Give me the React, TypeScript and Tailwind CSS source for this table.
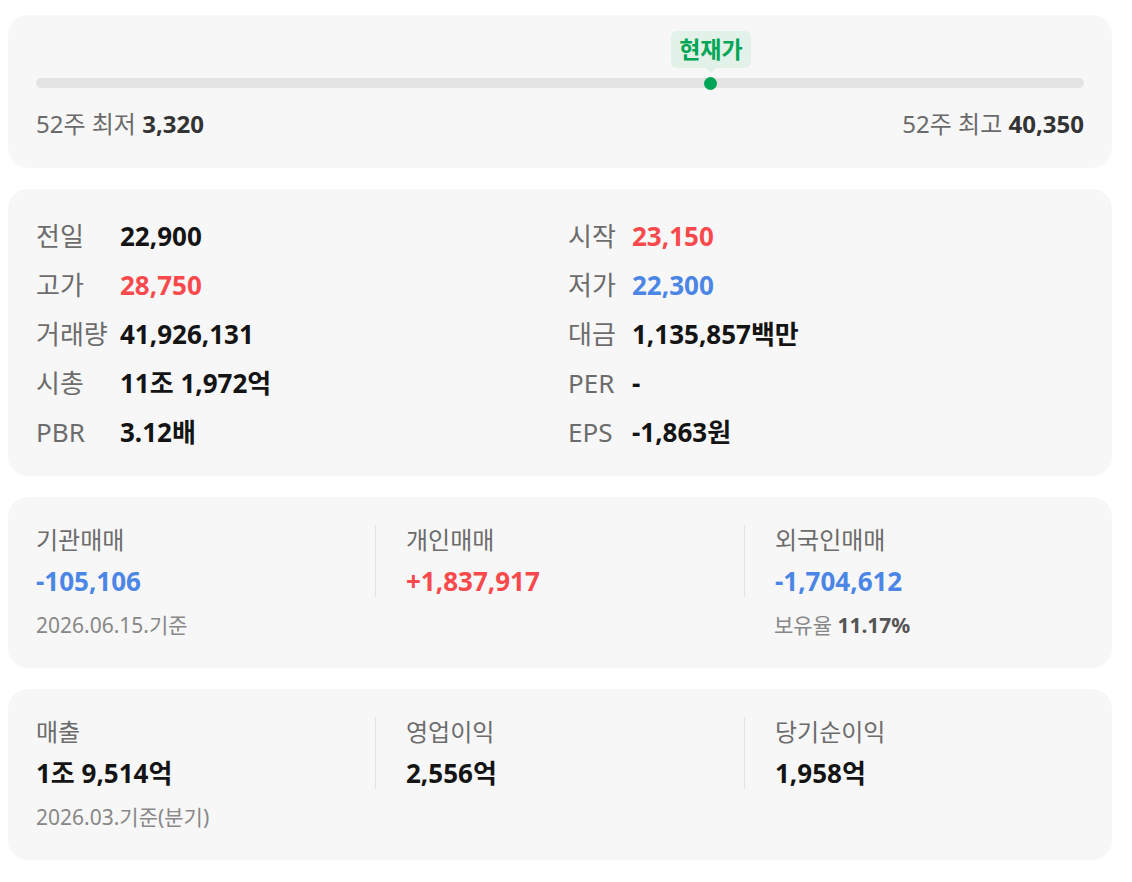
import React from "react"

const font = { fontFamily: '"Noto Sans", "Noto Sans CJK KR", sans-serif' }

type Cell = { label: string; value: string; tone?: "up" | "down" }

const toneClass = (tone?: "up" | "down") =>
  tone === "up" ? "text-[#f84a4d]" : tone === "down" ? "text-[#4b86e6]" : "text-[#141414]"

function PriceRange() {
  const pos = 64.4
  return (
    <div className="rounded-[20px] bg-[#f7f7f7] px-7 pt-4 pb-[28px]">
      <div className="relative h-[62px]">
        <div className="absolute top-[47px] left-0 right-0 h-[10px] rounded-full bg-[#e4e4e4]" />
        <div
          className="absolute top-0 flex -translate-x-1/2 flex-col items-center"
          style={{ left: `${pos}%` }}
        >
          <div className="flex h-[37px] w-[80px] items-center justify-center rounded-[6px] bg-[#e2f2e8] text-[23px] font-bold text-[#00a556]">
            현재가
          </div>
          <div className="h-0 w-0 border-x-[5px] border-t-[5px] border-x-transparent border-t-[#e2f2e8]" />
          <div className="mt-[4px] h-[13px] w-[13px] rounded-full bg-[#00a556]" />
        </div>
      </div>
      <div className="mt-[15px] flex justify-between text-[24px] leading-[32px] text-[#6a6a6a]">
        <span>
          52주 최저 <b className="font-bold text-[#333]">3,320</b>
        </span>
        <span>
          52주 최고 <b className="font-bold text-[#333]">40,350</b>
        </span>
      </div>
    </div>
  )
}

function Row({ label, value, tone, labelW }: Cell & { labelW: string }) {
  return (
    <div className="flex h-[49px] items-center text-[26px]">
      <span className={`${labelW} shrink-0 text-[#6c6c6c]`}>{label}</span>
      <span className={`font-bold ${toneClass(tone)}`}>{value}</span>
    </div>
  )
}

function Quote() {
  const left: Cell[] = [
    { label: "전일", value: "22,900" },
    { label: "고가", value: "28,750", tone: "up" },
    { label: "거래량", value: "41,926,131" },
    { label: "시총", value: "11조 1,972억" },
    { label: "PBR", value: "3.12배" },
  ]
  const right: Cell[] = [
    { label: "시작", value: "23,150", tone: "up" },
    { label: "저가", value: "22,300", tone: "down" },
    { label: "대금", value: "1,135,857백만" },
    { label: "PER", value: "-" },
    { label: "EPS", value: "-1,863원" },
  ]
  return (
    <div className="grid grid-cols-2 rounded-[20px] bg-[#f7f7f7] px-7 pt-[23px] pb-[19px]">
      <div>
        {left.map((c) => (
          <Row key={c.label} {...c} labelW="w-[84px]" />
        ))}
      </div>
      <div className="pl-[8px]">
        {right.map((c) => (
          <Row key={c.label} {...c} labelW="w-[64px]" />
        ))}
      </div>
    </div>
  )
}

type Stat = Cell & { note?: React.ReactNode }

function StatCard({ items }: { items: Stat[] }) {
  return (
    <div className="flex rounded-[20px] bg-[#f7f7f7] px-7 pt-7 pb-[28px]">
      {items.map((it, i) => (
        <div key={it.label} className={i === 0 ? "w-[339px]" : i === 1 ? "w-[369px]" : "flex-1"}>
          <div className={i > 0 ? "border-l border-[#e2e2e2] pl-[30px]" : ""}>
            <div className="text-[24px] leading-[30px] text-[#6c6c6c]">{it.label}</div>
            <div className={`mt-[10px] text-[26px] leading-[32px] font-bold ${toneClass(it.tone)}`}>
              {it.value}
            </div>
          </div>
          <div className={`mt-[13px] h-[30px] text-[21px] leading-[30px] text-[#888] ${i > 0 ? "pl-[30px]" : ""}`}>
            {it.note}
          </div>
        </div>
      ))}
    </div>
  )
}

export default function App() {
  return (
    <div className="w-[1104px] ml-2 flex flex-col gap-[21px] pt-[15px] pb-5 bg-white" style={font}>
      <PriceRange />
      <Quote />
      <StatCard
        items={[
          { label: "기관매매", value: "-105,106", tone: "down", note: "2026.06.15.기준" },
          { label: "개인매매", value: "+1,837,917", tone: "up" },
          {
            label: "외국인매매",
            value: "-1,704,612",
            tone: "down",
            note: (
              <>
                보유율 <b className="font-bold text-[#555]">11.17%</b>
              </>
            ),
          },
        ]}
      />
      <StatCard
        items={[
          { label: "매출", value: "1조 9,514억", note: "2026.03.기준(분기)" },
          { label: "영업이익", value: "2,556억" },
          { label: "당기순이익", value: "1,958억" },
        ]}
      />
    </div>
  )
}
